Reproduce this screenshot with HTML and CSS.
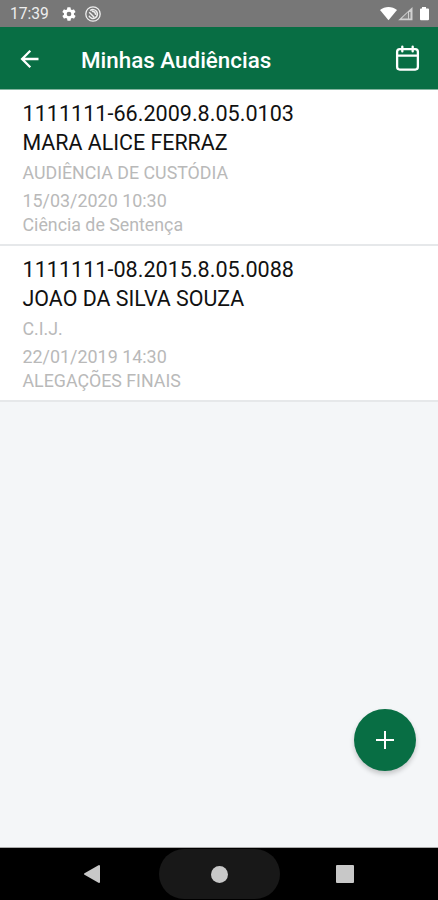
FILE: index.html
```html
<!DOCTYPE html>
<html lang="pt-BR">
  <head>
    <meta charset="UTF-8" />
    <meta name="viewport" content="width=device-width, initial-scale=1.0" />
    <title>Minhas Audiências</title>
    <link rel="stylesheet" href="styles.css">
  </head>
  <body>
    <div class="status-bar">
      <span class="clock">17:39</span>
      <svg class="gear" width="16" height="16" viewBox="0 0 24 24">
        <path d="M19.4 13a7.500 7.500 0 0 0 0-2l2.100-1.600a.5.5 0 0 0 .1-.6l-2-3.500a.5.5 0 0 0-.6-.2l-2.500 1a7.300 7.300 0 0 0-1.700-1l-.4-2.600a.5.5 0 0 0-.5-.5h-4a.5.5 0 0 0-.5.5L9 5.100a7.700 7.700 0 0 0-1.700 1l-2.500-1a.5.5 0 0 0-.6.200l-2 3.500a.5.5 0 0 0 .1.600L4.500 11a8 8 0 0 0 0 2l-2.100 1.600a.5.5 0 0 0-.1.600l2 3.500c.1.200.4.300.6.200l2.500-1a7.300 7.300 0 0 0 1.700 1l.4 2.600c0 .3.200.5.500.5h4c.3 0 .5-.2.500-.5l.4-2.600a7.700 7.700 0 0 0 1.700-1l2.500 1c.2.100.5 0 .6-.2l2-3.500a.5.5 0 0 0-.1-.6zM12 15.500a3.500 3.500 0 1 1 0-7 3.500 3.500 0 0 1 0 7z" fill="#fff" />
      </svg>
      <svg class="badge" width="16" height="16" viewBox="0 0 16 16" fill="none" stroke="#eee">
        <circle cx="8" cy="8" r="7.200" stroke-width="1.300" />
        <path d="M5.200 4.600A4.400 4.400 0 1 1 4 9.800M4.200 6.200l5 5M6.800 5.300c2.200 0 3.700 1.400 3.900 3.600" stroke-width="1.500" />
      </svg>
      <svg class="signals" width="50" height="16" viewBox="0 0 50 16">
        <path d="M0 4C4.800.1 12.200.1 17 4L8.500 14.300z" fill="#fff" />
        <path d="M32.500 1v13.300H18.200z" fill="#d0d0d0" />
        <path d="M28 6.300v6.200h-6.300z" fill="#858585" />
        <path d="M29 6h1.500v6.500H29z" fill="#858585" />
        <path d="M42 1h4v1.500h2a1 1 0 0 1 1 1v9.800a1 1 0 0 1-1 1h-7a1 1 0 0 1-1-1V3.500a1 1 0 0 1 1-1h1z" fill="#fff" />
      </svg>
    </div>

    <header class="header">
      <svg class="back" width="20" height="20" viewBox="0 0 20 20" fill="none" stroke="#fff" stroke-width="2.300">
        <path d="M18.500 10H2.500M10.300 1.800L2.100 10l8.200 8.200" />
      </svg>
      <h1>Minhas Audiências</h1>
      <svg class="calendar" width="25" height="27" viewBox="0 0 26 28" fill="none" stroke="#fff" stroke-width="2.400" stroke-linecap="round" stroke-linejoin="round">
        <rect x="2.200" y="4.300" width="21.600" height="21.200" rx="2.800" />
        <path d="M2.200 11h21.600M7.600 1.600v5M18.400 1.600v5" />
      </svg>
    </header>

    <main class="content">
      <section class="hearing">
        <p class="main-line">1111111-66.2009.8.05.0103</p>
        <p class="main-line name">MARA ALICE FERRAZ</p>
        <p class="kind">AUDIÊNCIA DE CUSTÓDIA</p>
        <p class="date">15/03/2020 10:30</p>
        <p>Ciência de Sentença</p>
      </section>
      <section class="hearing">
        <p class="main-line">1111111-08.2015.8.05.0088</p>
        <p class="main-line name">JOAO DA SILVA SOUZA</p>
        <p class="kind">C.I.J.</p>
        <p class="date">22/01/2019 14:30</p>
        <p>ALEGAÇÕES FINAIS</p>
      </section>
      <button class="fab" type="button" aria-label="Adicionar">
        <svg width="20" height="20" viewBox="0 0 20 20" stroke="#fff" stroke-width="2">
          <path d="M10 1v18M1 10h18" />
        </svg>
      </button>
    </main>

    <nav class="nav-bar">
      <svg width="18" height="20" viewBox="0 0 18 20">
        <path d="M16 2v16L2 10z" fill="#c8c8c8" stroke="#c8c8c8" stroke-width="2" stroke-linejoin="round" />
      </svg>
      <span class="home"><span class="dot"></span></span>
      <span class="recent"></span>
    </nav>
  </body>
</html>
```
FILE: styles.css
```css
* {
  box-sizing: border-box;
}
body {
  margin: 0;
  height: 900px;
  display: flex;
  flex-direction: column;
  font-family: Roboto, sans-serif;
  background-color: #f4f6f8;
  overflow: hidden;
}
h1,
p {
  margin: 0;
  white-space: nowrap;
}
svg {
  display: block;
  flex: none;
}
.status-bar {
  height: 27px;
  display: flex;
  align-items: center;
  padding: 1px 8px 0 10px;
  background-color: #777;
  color: #eee;
}
.clock {
  width: 51px;
  font-size: 15.6px;
}
.badge {
  margin-left: 8px;
}
.signals {
  margin-left: auto;
}
.header {
  height: 63px;
  display: flex;
  align-items: center;
  padding: 1px 18px 0 20px;
  background-color: #086e44;
  border-bottom: 1px solid #84b5a0;
  color: #fff;
}
.header h1 {
  margin-left: 41px;
  padding-top: 3px;
  font-size: 22.4px;
  font-weight: 500;
  line-height: 28px;
}
.calendar {
  margin-left: auto;
}
.content {
  flex: 1;
  position: relative;
  border-bottom: 1px solid #aaa;
}
.hearing {
  height: 156px;
  padding: 9px 22.500px 0;
  background-color: #fff;
  border-bottom: 2px solid #e6e8ea;
  color: #b9b9b9;
  font-size: 17.8px;
  line-height: 24px;
}
.main-line {
  color: #111;
  font-size: 21.6px;
  line-height: 29px;
}
.name {
  font-size: 21.4px;
}
.kind {
  margin: 4px 0;
}
.date {
  font-size: 17.9px;
}
.fab {
  position: absolute;
  right: 22px;
  bottom: 76px;
  width: 62px;
  height: 62px;
  display: flex;
  align-items: center;
  justify-content: center;
  padding: 0;
  border: none;
  border-radius: 50%;
  background-color: #086e44;
  box-shadow: 0 3px 5px rgba(0, 0, 0, 0.2);
}
.nav-bar {
  height: 52px;
  display: flex;
  align-items: center;
  padding: 0 84px 0 83px;
  background-color: #000;
}
.home {
  width: 121px;
  height: 50px;
  display: flex;
  align-items: center;
  justify-content: center;
  margin-left: 58px;
  border-radius: 25px;
  background-color: #181818;
}
.dot {
  width: 17px;
  height: 17px;
  border-radius: 50%;
  background-color: #c8c8c8;
}
.recent {
  width: 18px;
  height: 18px;
  margin-left: auto;
  border-radius: 1px;
  background-color: #c8c8c8;
}
```
